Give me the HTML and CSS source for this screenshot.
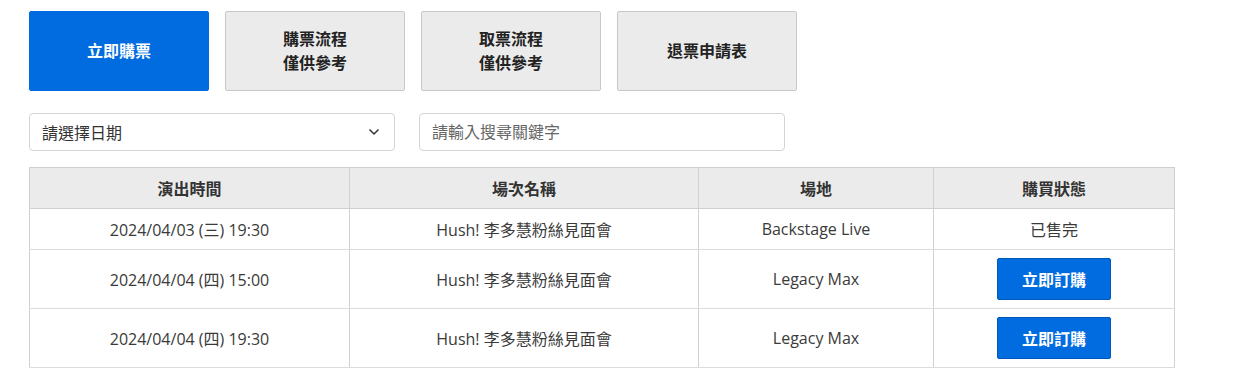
FILE: index.html
```html
<!DOCTYPE html>
<html lang="zh-Hant">
<head>
    <meta charset="UTF-8">
    <meta name="viewport" content="width=device-width, initial-scale=1.0">
    <title>購票</title>
    <link rel="stylesheet" href="styles.css">
</head>
<body>
    <div class="page">
        <div class="top-actions">
            <a class="tab-btn tab-primary">立即購票</a>
            <a class="tab-btn">購票流程<br>僅供參考</a>
            <a class="tab-btn">取票流程<br>僅供參考</a>
            <a class="tab-btn">退票申請表</a>
        </div>

        <div class="filters">
            <div class="select-box">
                <span>請選擇日期</span>
                <svg class="chevron" width="12" height="8" viewBox="0 0 12 8">
                    <path d="M1.5 1.5 L6 6 L10.5 1.5" fill="none" stroke="#333" stroke-width="1.5"/>
                </svg>
            </div>
            <input class="search-box" type="text" placeholder="請輸入搜尋關鍵字">
        </div>

        <table class="show-table">
            <colgroup>
                <col style="width: 320px">
                <col style="width: 349px">
                <col style="width: 235px">
                <col>
            </colgroup>
            <thead>
                <tr>
                    <th>演出時間</th>
                    <th>場次名稱</th>
                    <th>場地</th>
                    <th>購買狀態</th>
                </tr>
            </thead>
            <tbody>
                <tr class="row-short">
                    <td>2024/04/03 (三) 19:30</td>
                    <td>Hush! 李多慧粉絲見面會</td>
                    <td>Backstage Live</td>
                    <td>已售完</td>
                </tr>
                <tr class="row-tall">
                    <td>2024/04/04 (四) 15:00</td>
                    <td>Hush! 李多慧粉絲見面會</td>
                    <td>Legacy Max</td>
                    <td><button class="buy-btn">立即訂購</button></td>
                </tr>
                <tr class="row-tall">
                    <td>2024/04/04 (四) 19:30</td>
                    <td>Hush! 李多慧粉絲見面會</td>
                    <td>Legacy Max</td>
                    <td><button class="buy-btn">立即訂購</button></td>
                </tr>
            </tbody>
        </table>
    </div>
</body>
</html>
```

FILE: styles.css
```css
* {
    margin: 0;
    padding: 0;
    box-sizing: border-box;
}

body {
    font-family: "Open Sans", "Noto Sans CJK TC", sans-serif;
    font-size: 16px;
    color: #333;
    background: #fff;
}

.page {
    padding: 11px 0 0 29px;
    width: 1175px;
}

.top-actions {
    display: flex;
    gap: 16px;
}

.tab-btn {
    width: 180px;
    height: 80px;
    display: flex;
    align-items: center;
    justify-content: center;
    text-align: center;
    background: #ebebeb;
    border: 1px solid #c8c8c8;
    border-radius: 2px;
    font-size: 16px;
    font-weight: 700;
    line-height: 24px;
    color: #222;
}

.tab-primary {
    background: #006ce0;
    border-color: #006ce0;
    color: #fff;
}

.filters {
    display: flex;
    gap: 24px;
    margin-top: 22px;
}

.select-box,
.search-box {
    width: 366px;
    height: 38px;
    border: 1px solid #d4d4d4;
    border-radius: 4px;
    font-family: inherit;
    font-size: 16px;
    color: #333;
    padding: 0 12px;
}

.select-box {
    display: flex;
    align-items: center;
    justify-content: space-between;
    padding-right: 14px;
}

.search-box::placeholder {
    color: #666;
}

.show-table {
    margin-top: 16px;
    width: 1146px;
    border-collapse: collapse;
    table-layout: fixed;
    font-size: 16px;
}

.show-table th,
.show-table td {
    border: 1px solid #d0d0d0;
    text-align: center;
    vertical-align: middle;
}

.show-table th {
    background: #ebebeb;
    height: 41px;
    font-weight: 700;
    color: #333;
}

.show-table td {
    border-color: #dcdcdc #d0d0d0;
    color: #3a3a3a;
}

.row-short td {
    height: 41px;
}

.row-tall td {
    height: 59px;
}

.buy-btn {
    width: 114px;
    height: 42px;
    background: #006ce0;
    border: 1px solid #0058b8;
    border-radius: 2px;
    color: #fff;
    font-family: inherit;
    font-size: 16px;
    font-weight: 700;
    cursor: pointer;
}
```
